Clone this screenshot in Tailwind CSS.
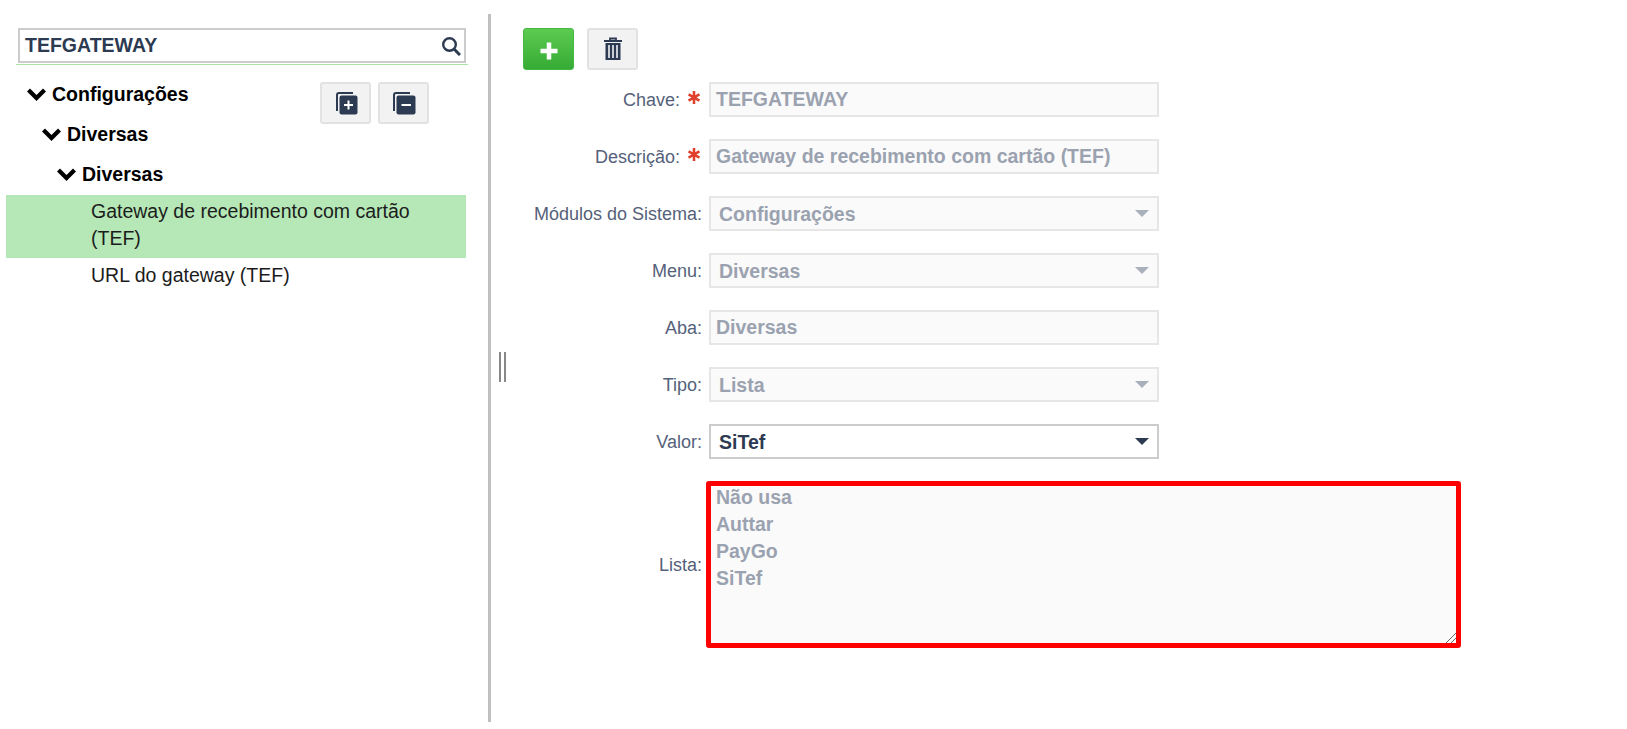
<!DOCTYPE html>
<html lang="en">
<head>
  <meta charset="UTF-8">
  <title>Configurações</title>
  <script src="https://cdn.jsdelivr.net/npm/@tailwindcss/browser@4"></script>
</head>
<body class="bg-white h-screen overflow-hidden font-['Liberation_Sans',Arial,sans-serif] text-[19.5px]">
  <div class="flex h-[729px]">
    <!-- tree panel -->
    <div class="w-[488px] shrink-0 pl-[6px] pt-[28px]">
      <div class="w-[460px]">
        <div class="ml-[12px] w-[448px] h-[35px] border-2 border-[#ccc] flex items-center justify-between pl-[5px] pr-[3px]">
          <span class="font-bold text-[#2c3a52]">TEFGATEWAY</span>
          <svg class="w-[20px] h-[20px]" viewBox="0 0 20 20" fill="none" stroke="#2c3a52" stroke-width="2.400"><circle cx="8.500" cy="8.500" r="6.300"/><path d="M13 13l6 6" stroke-width="3"/></svg>
        </div>
        <div class="ml-[10px] mr-[-2px] h-px bg-[#a9e2a5] mt-[1px]"></div>
        <div class="relative">
          <div class="absolute left-[314px] top-[7px] flex gap-[7px]">
            <button class="w-[51px] h-[42px] bg-[#f2f2f2] border-2 border-[#e2e2e2] rounded-[3px] flex items-center justify-center">
              <svg class="w-[24px] h-[24px]" viewBox="0 0 24 24"><path d="M2 20V4a3 3 0 0 1 3-3h14v2H5a1 1 0 0 0-1 1v16z" fill="#2c3a52"/><rect x="5.500" y="4.500" width="18" height="19" rx="2" fill="#2c3a52"/><path d="M10 14h9M14.500 9.500v9" stroke="#fff" stroke-width="2"/></svg>
            </button>
            <button class="w-[51px] h-[42px] bg-[#f2f2f2] border-2 border-[#e2e2e2] rounded-[3px] flex items-center justify-center">
              <svg class="w-[24px] h-[24px]" viewBox="0 0 24 24"><path d="M1 20V4a3 3 0 0 1 3-3h14v2H4a1 1 0 0 0-1 1v16z" fill="#2c3a52"/><rect x="4.500" y="4.500" width="19" height="19" rx="2" fill="#2c3a52"/><path d="M9.500 14h9.500" stroke="#fff" stroke-width="2"/></svg>
            </button>
          </div>
          <div class="flex items-center h-[40px] pl-[21px] font-bold text-black gap-[6px] mt-[10px]">
            <svg class="w-[19px] h-[14px]" viewBox="0 0 19 14" fill="none" stroke="#000" stroke-width="4.200"><path d="M1.500 2l8 8 8-8"/></svg>
            <span>Configurações</span>
          </div>
          <div class="flex items-center h-[40px] pl-[36px] font-bold text-black gap-[6px]">
            <svg class="w-[19px] h-[14px]" viewBox="0 0 19 14" fill="none" stroke="#000" stroke-width="4.200"><path d="M1.500 2l8 8 8-8"/></svg>
            <span>Diversas</span>
          </div>
          <div class="flex items-center h-[40px] pl-[51px] font-bold text-black gap-[6px]">
            <svg class="w-[19px] h-[14px]" viewBox="0 0 19 14" fill="none" stroke="#000" stroke-width="4.200"><path d="M1.500 2l8 8 8-8"/></svg>
            <span>Diversas</span>
          </div>
          <div class="bg-[#b5e8b6] h-[63px] pl-[85px] pr-[40px] pt-[3px] leading-[27px] text-[#1c1c1c]">Gateway de recebimento com cartão (TEF)</div>
          <div class="pl-[85px] leading-[27px] mt-[4px] text-[#1c1c1c]">URL do gateway (TEF)</div>
        </div>
      </div>
    </div>

    <!-- splitter -->
    <div class="w-[3px] h-[708px] mt-[14px] bg-[#bfbfbf] shrink-0"></div>
    <div class="w-[32px] shrink-0 pl-[8px] pt-[352px]">
      <div class="w-[7px] h-[30px] border-x-2 border-[#888]"></div>
    </div>

    <!-- form -->
    <div class="pt-[28px]">
      <div class="flex gap-[13px]">
        <button class="w-[51px] h-[42px] rounded-[3px] bg-gradient-to-b from-[#5ccb50] to-[#35ab35] border border-[#46b846] flex items-center justify-center">
          <svg class="w-[20px] h-[20px] mt-[3px]" viewBox="0 0 20 20"><path d="M10 1.500v17M1.500 10h17" stroke="#fff" stroke-width="4.500"/></svg>
        </button>
        <button class="w-[51px] h-[42px] rounded-[3px] bg-[#f2f2f2] border-2 border-[#e2e2e2] flex items-center justify-center">
          <svg class="w-[18px] h-[24px]" viewBox="0 0 18 24"><path d="M6 3V1.500h6V3" fill="none" stroke="#2c3a52" stroke-width="1.800"/><path d="M0 3h18v2H0z" fill="#2c3a52"/><path d="M1.500 6h15v17h-15z" fill="#2c3a52"/><path d="M5 8v13M9 8v13M13 8v13" stroke="#fff" stroke-width="1.500"/></svg>
        </button>
      </div>

      <div class="flex flex-col gap-[22px] mt-[12px] -ml-[177px] text-[19.5px]">
        <div class="flex items-center h-[35px]">
          <label class="w-[363px] text-right text-[#55617a] text-[18px] pr-[29px] pt-[2px] relative">Chave:<svg class="absolute right-[9px] top-[6px] w-[12px] h-[13px]" viewBox="0 0 12 13" stroke="#e0402c" stroke-width="2.600"><path d="M6 0v13M.6 3.300l10.800 6.400M.6 9.700l10.800-6.400"/></svg></label>
          <div class="w-[450px] h-[35px] border-2 border-[#e6e6e6] bg-[#fafafa] pl-[5px] font-bold text-[#9aa2b0] leading-[30px]">TEFGATEWAY</div>
        </div>
        <div class="flex items-center h-[35px]">
          <label class="w-[363px] text-right text-[#55617a] text-[18px] pr-[29px] pt-[2px] relative">Descrição:<svg class="absolute right-[9px] top-[6px] w-[12px] h-[13px]" viewBox="0 0 12 13" stroke="#e0402c" stroke-width="2.600"><path d="M6 0v13M.6 3.300l10.800 6.400M.6 9.700l10.800-6.400"/></svg></label>
          <div class="w-[450px] h-[35px] border-2 border-[#e6e6e6] bg-[#fafafa] pl-[5px] font-bold text-[#9aa2b0] leading-[30px]">Gateway de recebimento com cartão (TEF)</div>
        </div>
        <div class="flex items-center h-[35px]">
          <label class="w-[363px] text-right text-[#55617a] text-[18px] pr-[7px] pt-[2px]">Módulos do Sistema:</label>
          <div class="w-[450px] h-[35px] border-2 border-[#e6e6e6] bg-[#fafafa] pl-[8px] pr-[8px] pt-[3px] font-bold text-[#9aa2b0] flex items-center justify-between">Configurações<span class="w-0 h-0 -mt-[3px] border-x-[7px] border-x-transparent border-t-[7px] border-t-[#aab0bb]"></span></div>
        </div>
        <div class="flex items-center h-[35px]">
          <label class="w-[363px] text-right text-[#55617a] text-[18px] pr-[7px] pt-[2px]">Menu:</label>
          <div class="w-[450px] h-[35px] border-2 border-[#e6e6e6] bg-[#fafafa] pl-[8px] pr-[8px] pt-[3px] font-bold text-[#9aa2b0] flex items-center justify-between">Diversas<span class="w-0 h-0 -mt-[3px] border-x-[7px] border-x-transparent border-t-[7px] border-t-[#aab0bb]"></span></div>
        </div>
        <div class="flex items-center h-[35px]">
          <label class="w-[363px] text-right text-[#55617a] text-[18px] pr-[7px] pt-[2px]">Aba:</label>
          <div class="w-[450px] h-[35px] border-2 border-[#e6e6e6] bg-[#fafafa] pl-[5px] font-bold text-[#9aa2b0] leading-[30px]">Diversas</div>
        </div>
        <div class="flex items-center h-[35px]">
          <label class="w-[363px] text-right text-[#55617a] text-[18px] pr-[7px] pt-[2px]">Tipo:</label>
          <div class="w-[450px] h-[35px] border-2 border-[#e6e6e6] bg-[#fafafa] pl-[8px] pr-[8px] pt-[3px] font-bold text-[#9aa2b0] flex items-center justify-between">Lista<span class="w-0 h-0 -mt-[3px] border-x-[7px] border-x-transparent border-t-[7px] border-t-[#aab0bb]"></span></div>
        </div>
        <div class="flex items-center h-[35px]">
          <label class="w-[363px] text-right text-[#55617a] text-[18px] pr-[7px] pt-[2px]">Valor:</label>
          <div class="w-[450px] h-[35px] border-2 border-[#ccc] bg-white pl-[8px] pr-[8px] pt-[3px] font-bold text-[#2c3a52] flex items-center justify-between">SiTef<span class="w-0 h-0 -mt-[3px] border-x-[7px] border-x-transparent border-t-[7px] border-t-[#2c3a52]"></span></div>
        </div>
        <div class="flex items-center h-[167px]">
          <label class="w-[360px] text-right text-[#55617a] text-[18px] pr-[4px] pt-[2px]">Lista:</label>
          <div class="relative w-[755px] h-[167px] border-[5px] border-[#ff0000] rounded-[3px] bg-[#fafafa] pl-[5px] font-bold text-[#9aa2b0] leading-[27px] overflow-hidden">
            <div class="-mt-[2px] whitespace-pre-line">Não usa
Auttar
PayGo
SiTef</div>
            <svg class="absolute right-0 bottom-0 w-[10px] h-[10px]" viewBox="0 0 10 10" stroke="#666" stroke-width="1"><path d="M0 10L10 0M5 10l5-5"/></svg>
          </div>
        </div>
      </div>
    </div>
  </div>
</body>
</html>
